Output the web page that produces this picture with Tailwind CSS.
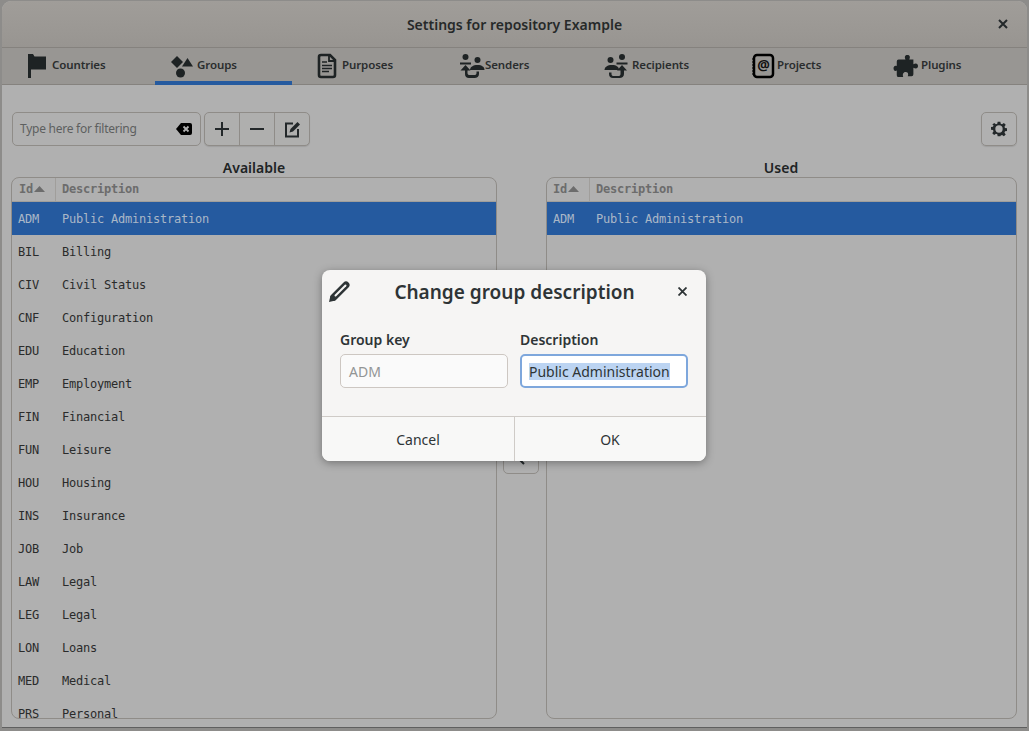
<!DOCTYPE html>
<html lang="en">

<head>
    <meta charset="UTF-8">
    <title>Settings for repository Example</title>
    <script src="https://cdn.jsdelivr.net/npm/@tailwindcss/browser@4"></script>
</head>

<body class="bg-[#8d8c8a] h-[731px] w-[1029px] overflow-hidden relative font-['Noto_Sans',sans-serif]">
    <!-- Main window (dimmed behind the dialog) -->
    <div class="absolute left-[2px] top-[1px] w-[1025px] h-[727px] rounded-t-[9px] bg-[#b0b0b0] flex flex-col overflow-hidden border-b border-[#5f5f5f]">
        <div class="h-[47px] shrink-0 bg-gradient-to-b from-[#a09d99] to-[#989591] flex items-center justify-center relative border-b border-[#85827e]">
            <h1 class="text-[14px] font-semibold text-[#262929]">Settings for repository Example</h1>
            <svg class="absolute right-[19px] top-[18px] w-[10px] h-[10px]" viewBox="0 0 10 10"><path d="M1 1l8 8M9 1l-8 8" stroke="#23282a" stroke-width="2"/></svg>
        </div>

        <!-- Tabs -->
        <div class="h-[37px] shrink-0 bg-[#989693] flex pl-[8px] border-b border-[#85827e] text-[11.500px] tracking-[-0.1px] font-semibold text-[#2a2d2e]">
            <div class="w-[145px] pl-[17px] h-full flex items-center gap-[1px]">
                <svg class="w-[24px] h-[26px] shrink-0 overflow-visible" viewBox="0 0 24 26" fill="#1e2324"><path d="M1 1h5l1.500 2.500H19v13H7v0H4V25H1z"/></svg>
                <span class="-mt-[2px]">Countries</span>
            </div>
            <div class="w-[137px] mr-[8px] pl-[17px] h-[37px] flex items-center gap-[1px] border-b-[4px] border-t-[4px] border-t-transparent border-b-[#255a9f]">
                <svg class="w-[24px] h-[26px] shrink-0 overflow-visible" viewBox="0 0 24 26" fill="#1e2324"><path d="M5 2l6 6-6 6-6-6z"/><path d="M15.500 4l5.500 8.500H10z"/><circle cx="8.500" cy="19" r="4.500"/></svg>
                <span class="-mt-[3px]">Groups</span>
            </div>
            <div class="w-[143px] pl-[17px] h-full flex items-center gap-[1px]">
                <svg class="w-[24px] h-[26px] shrink-0 overflow-visible" viewBox="0 0 24 26" fill="none" stroke="#1e2324"><path d="M4 2h9l5 5v15a2 2 0 0 1-2 2H4a2 2 0 0 1-2-2V4a2 2 0 0 1 2-2z" stroke-width="2.600"/><path d="M12 3v5h5" stroke-width="1.800"/><path d="M5 9h5M5 12.500h10M5 15.500h10M5 18.500h7" stroke-width="1.300"/></svg>
                <span class="-mt-[2px]">Purposes</span>
            </div>
            <div class="w-[147px] pl-[17px] h-full flex items-center gap-[1px]">
                <svg class="w-[24px] h-[26px] shrink-0 overflow-visible" viewBox="0 0 24 26" fill="#1e2324"><circle cx="5.500" cy="4" r="3"/><rect x="0" y="9.500" width="11" height="2"/><circle cx="17.500" cy="7" r="3"/><path d="M10 17c0-3 3-5 7.500-5s7 2 7 5z"/><path d="M5.500 12l5 5.500H7.500v2.500c0 1.500 1 2 2 2h5c1 0 2-.5 2-2v-1.500h2.500V21c0 2.500-2 4-4.500 4H9c-2.500 0-4-1.500-4-4v-3.500H.5z"/></svg>
                <span class="-mt-[2px]">Senders</span>
            </div>
            <div class="w-[145px] pl-[14px] h-full flex items-center gap-[4px]">
                <svg class="w-[24px] h-[26px] shrink-0 overflow-visible" viewBox="0 0 24 26" fill="#1e2324"><circle cx="6.500" cy="7" r="3"/><path d="M-1 17c0-3 3-5 7.500-5s7 2 7 5z" transform="translate(1.500 0)"/><circle cx="18" cy="4" r="3"/><rect x="12.500" y="9.500" width="11" height="2"/><path d="M18 12l5 5.500h-3v3.500c0 2.500-2 4-4.500 4H9c-2.500 0-4-1.500-4-4v-1.500h2.500V21c0 1.500 1 2 2 2h5c1 0 2-.5 2-2v-3.500H13z"/></svg>
                <span class="-mt-[2px]">Recipients</span>
            </div>
            <div class="w-[144px] pl-[17px] h-full flex items-center gap-[1px]">
                <svg class="w-[24px] h-[26px] shrink-0 overflow-visible" viewBox="0 0 24 26" fill="none"><rect x="2" y="2" width="19" height="22" rx="3" stroke="#000" stroke-width="2.500"/><path d="M0 6h2M0 9h2M0 12h2M0 15h2M0 18h2M0 21h2" stroke="#000" stroke-width="1.200"/><text x="11.500" y="17" text-anchor="middle" font-size="14" font-weight="700" fill="#111" font-family="Noto Sans">@</text></svg>
                <span class="-mt-[2px]">Projects</span>
            </div>
            <div class="pl-[17px] h-full flex items-center gap-[3px]">
                <svg class="w-[24px] h-[26px] shrink-0 -ml-[2px] overflow-visible" viewBox="0 0 26 26" fill="#1e2324"><path d="M9 6h3.500c-1.500-3-.5-5 2-5s3.500 2 2 5H21v5c3-1.500 5-.5 5 2s-2 3.500-5 2v7a2 2 0 0 1-2 2h-4c1-3 0-4.500-2.500-4.500S9 22 10 25H5a2 2 0 0 1-2-2v-5c-2.500 1-3.500-.5-3.500-2.500S1 12 3 13V8a2 2 0 0 1 2-2z"/></svg>
                <span class="-mt-[2px]">Plugins</span>
            </div>
        </div>

        <!-- Content -->
        <div class="flex-1 min-h-0 pl-[9px] pr-[10px] flex flex-col">
            <div class="flex justify-between mt-[27px] ml-[1px] h-[34px] shrink-0">
                <div class="flex gap-[3px]">
                    <div class="w-[189px] h-[34px] border border-[#8f8c88] rounded-[5px] flex items-center justify-between pl-[7px] pr-[8px]">
                        <span class="text-[12px] tracking-[-0.25px] text-[#5d5f5f]">Type here for filtering</span>
                        <svg class="w-[16px] h-[12px]" viewBox="0 0 16 12"><path d="M5 0h9a2 2 0 0 1 2 2v8a2 2 0 0 1-2 2H5L0 6z" fill="#000"/><path d="M7.500 3.500l5 5M12.500 3.500l-5 5" stroke="#b0b0b0" stroke-width="1.800"/></svg>
                    </div>
                    <div class="h-[34px] flex border border-[#8f8c88] rounded-[5px] shadow-[0_1px_1px_rgba(0,0,0,0.1)] bg-[#afafae]">
                        <div class="w-[35px] flex items-center justify-center border-r border-[#8f8c88]"><svg class="w-[14px] h-[14px]" viewBox="0 0 14 14"><path d="M7 0v14M0 7h14" stroke="#23282a" stroke-width="2"/></svg></div>
                        <div class="w-[35px] flex items-center justify-center border-r border-[#8f8c88]"><svg class="w-[14px] h-[14px]" viewBox="0 0 14 14"><path d="M0 7h14" stroke="#23282a" stroke-width="2"/></svg></div>
                        <div class="w-[34px] flex items-center justify-center"><svg class="w-[17px] h-[17px]" viewBox="0 0 17 17" fill="none"><path d="M9 2.500H2v13h12V8" stroke="#23282a" stroke-width="2"/><path d="M5.500 11.500l1-3.500 7-7 2.500 2.500-7 7z" fill="#23282a"/></svg></div>
                    </div>
                </div>
                <div class="w-[36px] h-[34px] border border-[#8f8c88] rounded-[5px] shadow-[0_1px_1px_rgba(0,0,0,0.1)] flex items-center justify-center">
                    <svg class="w-[16px] h-[16px]" viewBox="0 0 24 24" fill="#23282a"><path fill-rule="evenodd" d="M10 1h4l.6 3.200 2 .8L19.300 3l2.800 2.800-1.900 2.700.8 2 3 .5v4l-3 .5-.8 2 1.900 2.700-2.800 2.800-2.700-1.900-2 .8L14 23h-4l-.6-3.100-2-.8L4.700 21l-2.800-2.800 1.900-2.700-.8-2-3-.5v-4l3-.5.8-2L1.900 5.800 4.700 3l2.700 1.900 2-.8zM12 6.500a5.500 5.500 0 1 0 0 11 5.500 5.500 0 0 0 0-11z"/></svg>
                </div>
            </div>

            <div class="flex-1 min-h-0 flex mt-[14px] mb-[8px]">
                <!-- Available -->
                <div class="w-[486px] shrink-0 flex flex-col">
                    <div class="h-[17px] text-[14px] font-semibold leading-[15px] text-center text-[#202324]">Available</div>
                    <div class="flex-1 min-h-0 border border-[#8f8c88] rounded-[8px] overflow-hidden font-['DejaVu_Sans_Mono',monospace] text-[12px] tracking-[-0.22px] text-[#2a2b2b]">
                        <div class="h-[24px] pb-[2px] flex border-b border-[#a09e9b] text-[#6c6c6c] font-bold">
                            <div class="w-[44px] pl-[7px] flex items-center border-r border-[#a09e9b] -mb-[2px] pb-[2px]">Id<svg class="w-[11px] h-[6px] ml-[1px]" viewBox="0 0 11 6"><path d="M5.500 0L11 6H0z" fill="#6c6c6c"/></svg></div>
                            <div class="pl-[6px] flex items-center">Description</div>
                        </div>
                        <div class="h-[33px] flex items-center bg-[#255a9f] text-[#aab7c7]"><span class="w-[44px] pl-[6px]">ADM</span><span class="pl-[6px]">Public Administration</span></div>
                        <div class="h-[33px] flex items-center"><span class="w-[44px] pl-[6px]">BIL</span><span class="pl-[6px]">Billing</span></div>
                        <div class="h-[33px] flex items-center"><span class="w-[44px] pl-[6px]">CIV</span><span class="pl-[6px]">Civil Status</span></div>
                        <div class="h-[33px] flex items-center"><span class="w-[44px] pl-[6px]">CNF</span><span class="pl-[6px]">Configuration</span></div>
                        <div class="h-[33px] flex items-center"><span class="w-[44px] pl-[6px]">EDU</span><span class="pl-[6px]">Education</span></div>
                        <div class="h-[33px] flex items-center"><span class="w-[44px] pl-[6px]">EMP</span><span class="pl-[6px]">Employment</span></div>
                        <div class="h-[33px] flex items-center"><span class="w-[44px] pl-[6px]">FIN</span><span class="pl-[6px]">Financial</span></div>
                        <div class="h-[33px] flex items-center"><span class="w-[44px] pl-[6px]">FUN</span><span class="pl-[6px]">Leisure</span></div>
                        <div class="h-[33px] flex items-center"><span class="w-[44px] pl-[6px]">HOU</span><span class="pl-[6px]">Housing</span></div>
                        <div class="h-[33px] flex items-center"><span class="w-[44px] pl-[6px]">INS</span><span class="pl-[6px]">Insurance</span></div>
                        <div class="h-[33px] flex items-center"><span class="w-[44px] pl-[6px]">JOB</span><span class="pl-[6px]">Job</span></div>
                        <div class="h-[33px] flex items-center"><span class="w-[44px] pl-[6px]">LAW</span><span class="pl-[6px]">Legal</span></div>
                        <div class="h-[33px] flex items-center"><span class="w-[44px] pl-[6px]">LEG</span><span class="pl-[6px]">Legal</span></div>
                        <div class="h-[33px] flex items-center"><span class="w-[44px] pl-[6px]">LON</span><span class="pl-[6px]">Loans</span></div>
                        <div class="h-[33px] flex items-center"><span class="w-[44px] pl-[6px]">MED</span><span class="pl-[6px]">Medical</span></div>
                        <div class="h-[33px] flex items-center"><span class="w-[44px] pl-[6px]">PRS</span><span class="pl-[6px]">Personal</span></div>
                    </div>
                </div>

                <!-- Move buttons, mostly hidden by the dialog -->
                <div class="w-[49px] shrink-0 flex flex-col items-center pt-[282px] pr-[1px]">
                    <div class="w-[36px] h-[32px] border border-[#8f8c88] rounded-[5px] flex items-center justify-center">
                        <svg class="w-[10px] h-[14px]" viewBox="0 0 10 14" fill="none"><path d="M8 1L2 7l6 6" stroke="#23282a" stroke-width="2"/></svg>
                    </div>
                </div>

                <!-- Used -->
                <div class="flex-1 min-w-0 flex flex-col">
                    <div class="h-[17px] text-[14px] font-semibold leading-[15px] text-center text-[#202324] pr-[1px]">Used</div>
                    <div class="flex-1 min-h-0 border border-[#8f8c88] rounded-[8px] overflow-hidden font-['DejaVu_Sans_Mono',monospace] text-[12px] tracking-[-0.22px] text-[#2a2b2b]">
                        <div class="h-[24px] pb-[2px] flex border-b border-[#a09e9b] text-[#6c6c6c] font-bold">
                            <div class="w-[43px] pl-[6px] flex items-center border-r border-[#a09e9b] -mb-[2px] pb-[2px]">Id<svg class="w-[11px] h-[6px] ml-[1px]" viewBox="0 0 11 6"><path d="M5.500 0L11 6H0z" fill="#6c6c6c"/></svg></div>
                            <div class="pl-[6px] flex items-center">Description</div>
                        </div>
                        <div class="h-[33px] flex items-center bg-[#255a9f] text-[#aab7c7]"><span class="w-[43px] pl-[6px]">ADM</span><span class="pl-[6px]">Public Administration</span></div>
                    </div>
                </div>
            </div>
        </div>
    </div>

    <!-- Dialog -->
    <div class="absolute left-[322px] top-[270px] w-[384px] h-[191px] rounded-[8px] bg-[#f6f5f4] shadow-[0_2px_8px_rgba(0,0,0,0.35)] flex flex-col overflow-hidden text-[#2e3436]">
        <div class="h-[44px] shrink-0 relative flex items-center justify-center pl-[1px]">
            <svg class="absolute left-[7px] top-[11px] w-[23px] h-[22px]" viewBox="0 0 23 22" fill="none"><path d="M5 16L17 4" stroke="#2e3436" stroke-width="7" stroke-linecap="round"/><path d="M0 21l1.500-6.500 5 5z" fill="#2e3436"/><path d="M6.500 14.500L16.500 4.500" stroke="#f6f5f4" stroke-width="2" stroke-linecap="round"/></svg>
            <h2 class="text-[19px] font-semibold">Change group description</h2>
            <svg class="absolute right-[19px] top-[17px] w-[9px] h-[9px]" viewBox="0 0 9 9"><path d="M.5.5l8 8M8.500.5l-8 8" stroke="#2e3436" stroke-width="1.800"/></svg>
        </div>
        <div class="flex-1 min-h-0 flex gap-[12px] px-[18px] pt-[16px]">
            <div class="w-[168px]">
                <div class="h-[20px] text-[14px] font-semibold leading-[20px] mb-[4px]">Group key</div>
                <div class="h-[34px] rounded-[5px] border border-[#cdc7c2] bg-[#fafafa] text-[14px] text-[#929595] flex items-center pl-[8px]">ADM</div>
            </div>
            <div class="w-[168px]">
                <div class="h-[20px] text-[14px] font-semibold leading-[20px] mb-[4px]">Description</div>
                <div class="h-[34px] rounded-[5px] border-2 border-[#7ea7dc] bg-white text-[14px] flex items-center pl-[7px]"><span class="inline-block h-[17px] bg-[#bcd4f2] leading-[17px]">Public Administration</span></div>
            </div>
        </div>
        <div class="h-[45px] shrink-0 flex border-t border-[#cfcbc7] bg-[#f8f8f7] text-[14px] pt-[1px]">
            <div class="w-[193px] flex items-center justify-center border-r border-[#cfcbc7] -mt-[1px] pt-[1px]">Cancel</div>
            <div class="flex-1 flex items-center justify-center pr-[1px]">OK</div>
        </div>
    </div>
</body>

</html>
